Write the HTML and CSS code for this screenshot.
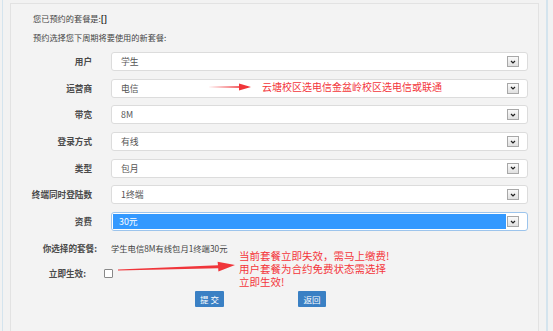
FILE: index.html
```html
<!DOCTYPE html>
<html>
<head>
<meta charset="utf-8">
<link rel="stylesheet" href="styles.css">
</head>
<body>
<div class="frame">
  <div class="panel">
    <p class="intro first">您已预约的套餐是:<b>[]</b></p>
    <p class="intro">预约选择您下周期将要使用的新套餐:</p>
    <div class="form">
      <div class="label">用户</div>
      <div class="select"><span class="val">学生</span><span class="btn"><svg viewBox="0 0 10 10" width="8" height="8"><path d="M2.5 3.8 L5 6.2 L7.5 3.8" fill="none" stroke="#222" stroke-width="1.6"/></svg></span></div>
      <div class="label">运营商</div>
      <div class="select"><span class="val">电信</span><span class="btn"><svg viewBox="0 0 10 10" width="8" height="8"><path d="M2.5 3.8 L5 6.2 L7.5 3.8" fill="none" stroke="#222" stroke-width="1.6"/></svg></span></div>
      <div class="label">带宽</div>
      <div class="select"><span class="val">8M</span><span class="btn"><svg viewBox="0 0 10 10" width="8" height="8"><path d="M2.5 3.8 L5 6.2 L7.5 3.8" fill="none" stroke="#222" stroke-width="1.6"/></svg></span></div>
      <div class="label">登录方式</div>
      <div class="select"><span class="val">有线</span><span class="btn"><svg viewBox="0 0 10 10" width="8" height="8"><path d="M2.5 3.8 L5 6.2 L7.5 3.8" fill="none" stroke="#222" stroke-width="1.6"/></svg></span></div>
      <div class="label">类型</div>
      <div class="select"><span class="val">包月</span><span class="btn"><svg viewBox="0 0 10 10" width="8" height="8"><path d="M2.5 3.8 L5 6.2 L7.5 3.8" fill="none" stroke="#222" stroke-width="1.6"/></svg></span></div>
      <div class="label">终端同时登陆数</div>
      <div class="select"><span class="val">1终端</span><span class="btn"><svg viewBox="0 0 10 10" width="8" height="8"><path d="M2.5 3.8 L5 6.2 L7.5 3.8" fill="none" stroke="#222" stroke-width="1.6"/></svg></span></div>
      <div class="label">资费</div>
      <div class="select focus"><span class="val sel">30元</span><span class="btn"><svg viewBox="0 0 10 10" width="8" height="8"><path d="M2.5 3.8 L5 6.2 L7.5 3.8" fill="none" stroke="#222" stroke-width="1.6"/></svg></span></div>
      <div class="label wide">你选择的套餐:</div>
      <div class="plain">学生电信8M有线包月1终端30元</div>
      <div class="label short">立即生效:</div>
      <div class="plain"><span class="check"></span></div>
    </div>
    <div class="buttons">
      <span class="button">提 交</span>
      <span class="button">返回</span>
    </div>
  </div>
  <div class="note note1">
    <svg class="arrow" width="44" height="8" viewBox="0 0 44 8"><path d="M0 4 L31 3.3 L31 0.5 L43 4 L31 7.5 L31 4.7 Z" fill="#f0353a"/></svg>
    <span>云塘校区选电信金盆岭校区选电信或联通</span>
  </div>
  <svg class="arrow2" width="118" height="12" viewBox="0 0 118 12"><path d="M0 9.5 L100 5.2 L99.6 1.8 L117 5 L100.4 11.5 L100.2 8.2 L0 10.6 Z" fill="#f0353a"/></svg>
  <div class="note note2">当前套餐立即失效，需马上缴费!<br>用户套餐为合约免费状态需选择<br>立即生效!</div>
</div>
</body>
</html>
```
FILE: styles.css
```css
html, body {
  margin: 0;
  padding: 0;
}
body {
  width: 553px;
  height: 331px;
  overflow: hidden;
  background: #f2f2f2;
  font-family: "Microsoft YaHei", "Noto Sans CJK SC", "Liberation Sans", sans-serif;
  color: #333;
}
.frame {
  position: relative;
  height: 331px;
  margin-left: 2px;
  width: 546px;
  border-left: 1px solid #d4e4ee;
  border-right: 2px solid #d4e4ee;
  padding-top: 3px;
  box-sizing: border-box;
}
.panel {
  margin-left: 7px;
  width: 529px;
  height: 340px;
  border: 1px solid #e2e2e2;
  box-sizing: border-box;
  background: #f3f3f3;
}
.intro {
  margin: 0;
  padding-left: 22px;
  font-size: 8.2px;
  line-height: 12px;
  color: #444;
}
.intro.first {
  margin-top: 8px;
}
.intro + .intro {
  margin-top: 7px;
}
.intro b {
  color: #111;
}
.form {
  display: grid;
  grid-template-columns: 81px 417px;
  column-gap: 19px;
  margin-top: 9px;
}
.label {
  text-align: right;
  font-size: 8.6px;
  font-weight: bold;
  color: #4a4a4a;
  height: 19px;
  line-height: 19px;
  margin-bottom: 7.7px;
}
.label.wide {
  margin-right: -5px;
  margin-bottom: 6px;
}
.label.short {
  margin-right: 6px;
}
.select {
  position: relative;
  height: 19px;
  box-sizing: border-box;
  border: 1px solid #dcdcdc;
  border-radius: 3px;
  background: #fff;
  display: flex;
  align-items: center;
  margin-bottom: 7.7px;
}
.select.focus {
  border-color: #9cc4ec;
}
.val {
  font-size: 8.8px;
  color: #555;
  padding-left: 9px;
  flex: 1;
}
.val.sel {
  background: #3399ff;
  color: #fff;
  margin-left: 1px;
  padding-left: 6px;
  height: 15px;
  line-height: 15px;
  margin-right: 1px;
}
.btn {
  width: 10px;
  height: 9px;
  margin-right: 8px;
  border: 1px solid #a8a8a8;
  background: linear-gradient(#fafafa, #e0e0e0);
  display: flex;
  align-items: center;
  justify-content: center;
}
.plain {
  justify-self: start;
  font-size: 8.3px;
  color: #444;
  height: 19px;
  line-height: 19px;
  display: flex;
  align-items: center;
}
.check {
  display: inline-block;
  width: 7px;
  height: 7px;
  border: 1px solid #888;
  border-radius: 1px;
  background: #fff;
  margin-left: -7px;
}
.buttons {
  display: flex;
  margin-top: 0;
  padding-left: 184px;
  gap: 74px;
}
.button {
  display: inline-block;
  background: #3a80c4;
  color: #fff;
  font-size: 8.5px;
  height: 16px;
  line-height: 16px;
  padding: 0 5px;
  border-radius: 1px;
  min-width: 18px;
  text-align: center;
}
.note {
  position: absolute;
  color: #f3363b;
  font-size: 10px;
}
.note1 {
  left: 205px;
  top: 80px;
  display: flex;
  align-items: center;
  gap: 10px;
  line-height: 14px;
}
.note2 {
  left: 236px;
  top: 249px;
  line-height: 13px;
  font-size: 10.5px;
}
.arrow2 {
  position: absolute;
  left: 115px;
  top: 260px;
}
```
